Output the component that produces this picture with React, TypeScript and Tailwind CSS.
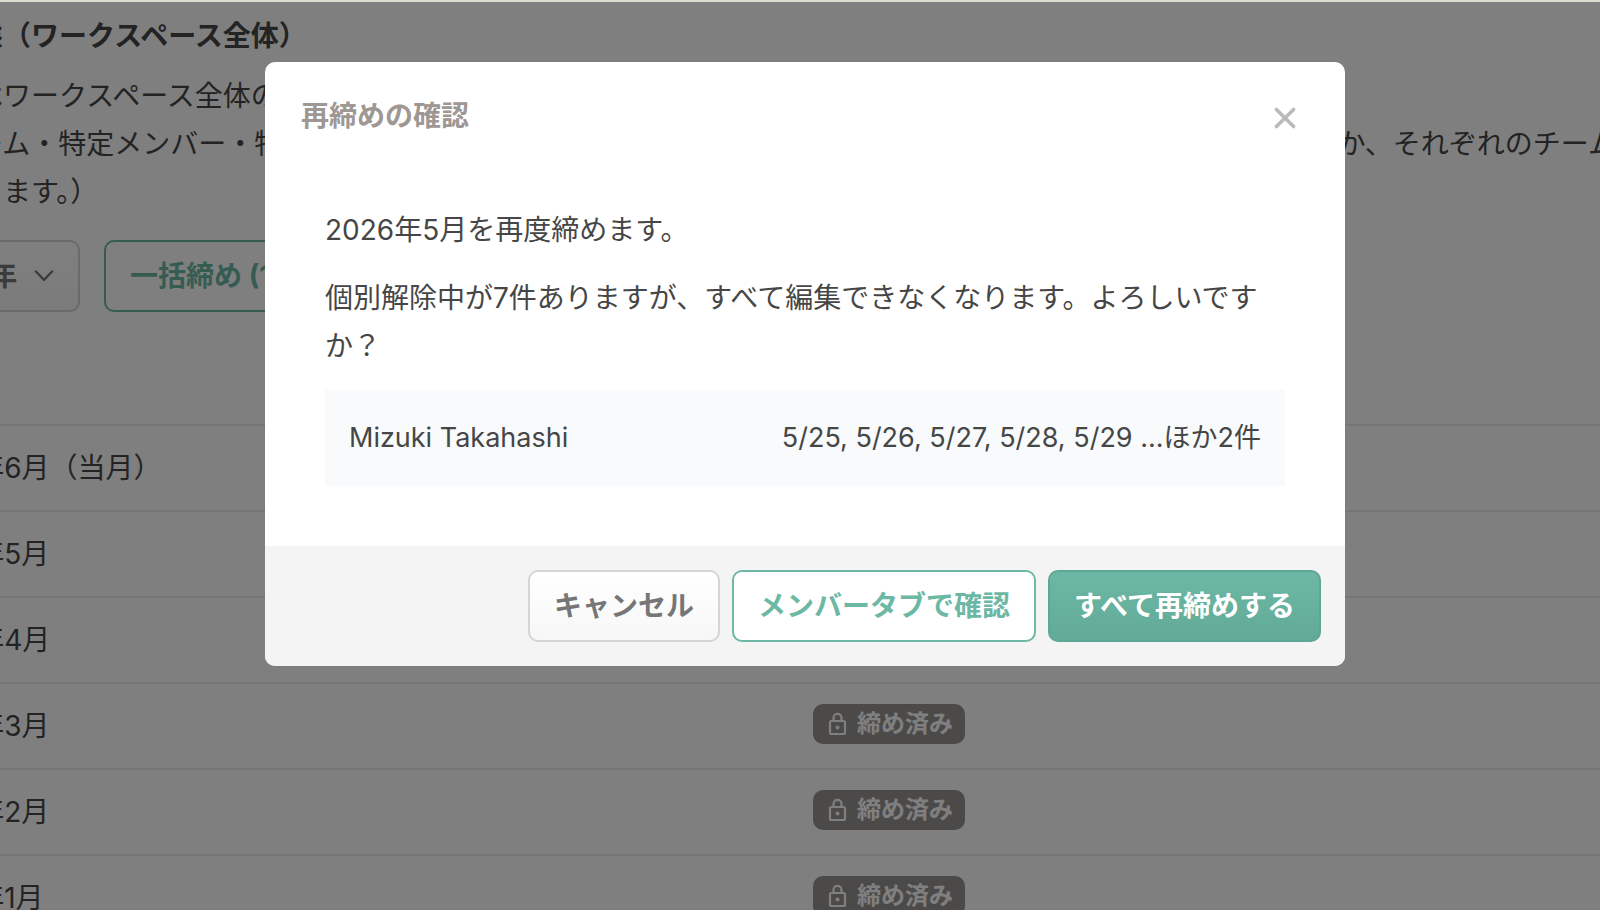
import { useState } from 'react';

const months = [
  { id: 6, name: '2026年6月（当月）', closed: false },
  { id: 5, name: '2026年5月', closed: true },
  { id: 4, name: '2026年4月', closed: true },
  { id: 3, name: '2026年3月', closed: true },
  { id: 2, name: '2026年2月', closed: true },
  { id: 1, name: '2026年1月', closed: true },
];

function LockIcon() {
  return (
    <svg className="w-6 h-6" viewBox="0 0 24 24" fill="none" stroke="currentColor" strokeWidth="2.2" aria-hidden="true">
      <rect x="5" y="9" width="15" height="13" rx="1.5" />
      <path d="M8.5 9V5.8a4 4 0 0 1 8 0V9" />
      <circle cx="12.5" cy="15.5" r="2" fill="currentColor" stroke="none" />
    </svg>
  );
}

function ClosedBadge() {
  return (
    <span className="inline-flex items-center gap-2 h-10 px-3 rounded-[10px] bg-[#989490] text-white text-2xl font-bold align-middle">
      <LockIcon />
      締め済み
    </span>
  );
}

export default function App() {
  const [year, setYear] = useState('2026');
  const [open, setOpen] = useState(true);

  return (
    <div className="h-screen overflow-hidden flex flex-col bg-white text-[28px] leading-[48px] text-[#464646] font-['Inter','Noto_Sans_CJK_JP',sans-serif]">
      <div className="h-[2px] shrink-0 bg-[#dadece]" />

      <div className="relative flex-1 min-h-0 overflow-hidden">
        {/* Page */}
        <main className="-ml-[109px] pt-[10px] whitespace-nowrap">
          <h2 className="font-bold">締め状態（ワークスペース全体）</h2>
          <div className="mt-3">
            <p>こちらはワークスペース全体の</p>
            <p className="flex justify-between">
              <span>（各チーム・特定メンバー・特</span>
              <span className="-mr-4">か、それぞれのチーム</span>
            </p>
            <p>確認できます。）</p>
          </div>

          <div className="flex gap-6 mt-6">
            <div className="relative">
              <select
                aria-label="対象年"
                value={year}
                onChange={(e) => setYear(e.target.value)}
                className="appearance-none w-[189px] h-[72px] pl-6 pr-14 rounded-[10px] border-2 border-[#d5d5d5] bg-linear-to-b from-white to-[#f7f7f7] font-bold text-[#767676]"
              >
                <option value="2026">2026年</option>
                <option value="2025">2025年</option>
              </select>
              <svg className="absolute right-[26px] top-[30px] w-5 h-3 pointer-events-none" viewBox="0 0 20 12" fill="none" stroke="#767676" strokeWidth="2.4" strokeLinecap="round" strokeLinejoin="round">
                <path d="M2 1.5l8 8.5 8-8.5" />
              </svg>
            </div>
            <button type="button" className="h-[72px] px-6 rounded-[10px] border-2 border-[#6cb8a5] bg-white font-bold text-[#6cb8a5]">
              一括締め (1件)
            </button>
          </div>

          <table className="mt-28 w-full table-fixed border-separate border-spacing-0 border-t-2 border-[#ebebeb]">
            <tbody>
              {months.map((month) => (
                <tr key={month.id}>
                  <td className="w-[922px] h-[86px] p-0 pl-4 border-b-2 border-[#ebebeb]">{month.name}</td>
                  <td className="h-[86px] p-0 pb-2 border-b-2 border-[#ebebeb]">{month.closed && <ClosedBadge />}</td>
                </tr>
              ))}
            </tbody>
          </table>
        </main>

        {/* Dialog */}
        {open && (
          <div className="absolute inset-0 flex justify-center items-start bg-black/50 pt-[60px] pl-[10px]">
            <div role="dialog" aria-modal="true" aria-labelledby="dialog-title" className="w-full max-w-[1080px] rounded-[10px] overflow-hidden bg-white">
              <header className="flex items-end justify-between h-[84px] pb-[6px] pl-9 pr-12">
                <h1 id="dialog-title" className="font-bold text-[#9e9794]">再締めの確認</h1>
                <button type="button" aria-label="閉じる" onClick={() => setOpen(false)} className="mb-[10px] w-6 h-6 text-[#bababa]">
                  <svg className="w-6 h-6" viewBox="0 0 24 24" fill="none" stroke="currentColor" strokeWidth="3.6" strokeLinecap="round">
                    <path d="M3.4 3.4l17.2 17.2M20.6 3.4L3.4 20.6" />
                  </svg>
                </button>
              </header>

              <div className="p-[60px] space-y-5">
                <p>2026年5月を再度締めます。</p>
                <p>個別解除中が7件ありますが、すべて編集できなくなります。よろしいですか？</p>
                <div className="flex justify-between p-6 bg-[#f8fafc] text-[27px]">
                  <span>Mizuki Takahashi</span>
                  <span>5/25, 5/26, 5/27, 5/28, 5/29 ...ほか2件</span>
                </div>
              </div>

              <footer className="flex justify-end gap-3 p-6 bg-[#f4f4f4] font-bold">
                <button type="button" onClick={() => setOpen(false)} className="h-[72px] px-6 rounded-[10px] border-2 border-[#d5d5d5] bg-linear-to-b from-white to-[#f7f7f7] text-[#767676]">
                  キャンセル
                </button>
                <button type="button" className="h-[72px] px-6 rounded-[10px] border-2 border-[#6cb8a5] bg-white text-[#6cb8a5]">
                  メンバータブで確認
                </button>
                <button type="button" className="h-[72px] px-6 rounded-[10px] border-2 border-[#5fa694] bg-linear-to-b from-[#6cb8a5] to-[#62aa98] text-white">
                  すべて再締めする
                </button>
              </footer>
            </div>
          </div>
        )}
      </div>
    </div>
  );
}
